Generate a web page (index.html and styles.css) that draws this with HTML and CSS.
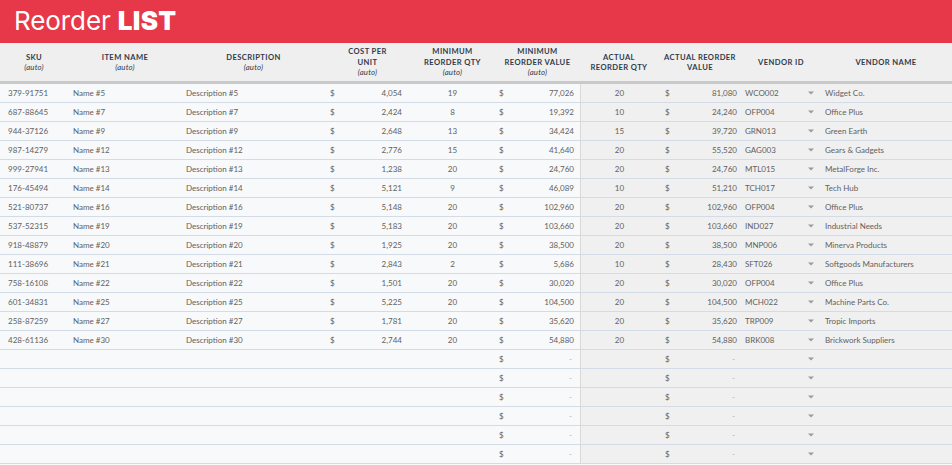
FILE: index.html
```html
<!DOCTYPE html>
<html>
<head>
<meta charset="utf-8">
<link rel="stylesheet" href="styles.css">
</head>
<body>
<div class="banner"><h1 class="title">Reorder <b>LIST</b></h1></div>
<div class="table">
  <div class="row head">
    <div class="hc">SKU<i>(auto)</i></div>
    <div class="hc">ITEM NAME<i>(auto)</i></div>
    <div class="hc">DESCRIPTION<i>(auto)</i></div>
    <div class="hc">COST PER<br>UNIT<i>(auto)</i></div>
    <div class="hc">MINIMUM<br>REORDER QTY<i>(auto)</i></div>
    <div class="hc">MINIMUM<br>REORDER VALUE<i>(auto)</i></div>
    <div class="hc">ACTUAL<br>REORDER QTY</div>
    <div class="hc">ACTUAL REORDER<br>VALUE</div>
    <div class="hc">VENDOR ID</div>
    <div class="hc">VENDOR NAME</div>
  </div>
  <div id="body"></div>
</div>
<script src="app.js"></script>
</body>
</html>
```

FILE: app.js
```js
var data = [
["379-91751","Name #5","Description #5","4,054","19","77,026","20","81,080","WCO002","Widget Co."],
["687-88645","Name #7","Description #7","2,424","8","19,392","10","24,240","OFP004","Office Plus"],
["944-37126","Name #9","Description #9","2,648","13","34,424","15","39,720","GRN013","Green Earth"],
["987-14279","Name #12","Description #12","2,776","15","41,640","20","55,520","GAG003","Gears &amp; Gadgets"],
["999-27941","Name #13","Description #13","1,238","20","24,760","20","24,760","MTL015","MetalForge Inc."],
["176-45494","Name #14","Description #14","5,121","9","46,089","10","51,210","TCH017","Tech Hub"],
["521-80737","Name #16","Description #16","5,148","20","102,960","20","102,960","OFP004","Office Plus"],
["537-52315","Name #19","Description #19","5,183","20","103,660","20","103,660","IND027","Industrial Needs"],
["918-48879","Name #20","Description #20","1,925","20","38,500","20","38,500","MNP006","Minerva Products"],
["111-38696","Name #21","Description #21","2,843","2","5,686","10","28,430","SFT026","Softgoods Manufacturers"],
["758-16108","Name #22","Description #22","1,501","20","30,020","20","30,020","OFP004","Office Plus"],
["601-34831","Name #25","Description #25","5,225","20","104,500","20","104,500","MCH022","Machine Parts Co."],
["258-87259","Name #27","Description #27","1,781","20","35,620","20","35,620","TRP009","Tropic Imports"],
["428-61136","Name #30","Description #30","2,744","20","54,880","20","54,880","BRK008","Brickwork Suppliers"]
];
var arrow = '<svg class="dd" width="6" height="4" viewBox="0 0 6 4"><path d="M0 0.5h6L3 3.5z" fill="#9a9a9a"/></svg>';
var html = "";
data.forEach(function(r){
  html += '<div class="row">' +
    '<div class="c">'+r[0]+'</div>' +
    '<div class="c">'+r[1]+'</div>' +
    '<div class="c">'+r[2]+'</div>' +
    '<div class="c cur cost"><span>$</span><span>'+r[3]+'</span></div>' +
    '<div class="c ctr">'+r[4]+'</div>' +
    '<div class="c cur minv"><span>$</span><span>'+r[5]+'</span></div>' +
    '<div class="c ctr g sep">'+r[6]+'</div>' +
    '<div class="c cur actv g"><span>$</span><span>'+r[7]+'</span></div>' +
    '<div class="c vid g"><span>'+r[8]+'</span>'+arrow+'</div>' +
    '<div class="c vname g">'+r[9]+'</div>' +
  '</div>';
});
for (var i=0;i<6;i++){
  html += '<div class="row">' +
    '<div class="c"></div><div class="c"></div><div class="c"></div><div class="c"></div><div class="c"></div>' +
    '<div class="c cur minv"><span>$</span><span class="dash">-</span></div>' +
    '<div class="c g sep"></div>' +
    '<div class="c cur actv g"><span>$</span><span class="dash">-</span></div>' +
    '<div class="c vid g"><span></span>'+arrow+'</div>' +
    '<div class="c g"></div>' +
  '</div>';
}
document.getElementById("body").innerHTML = html;
```

FILE: styles.css
```css
html, body { margin: 0; padding: 0; }
body {
  width: 952px;
  height: 465px;
  overflow: hidden;
  background: #f8f9fa;
  font-family: "Lato", "Liberation Sans", sans-serif;
}
.banner {
  height: 43px;
  background: #e63848;
  display: flex;
  align-items: center;
  padding-left: 14px;
}
.title {
  margin: 0;
  font-family: "Inter", "Liberation Sans", sans-serif;
  font-weight: 400;
  font-size: 26px;
  color: #fff;
  letter-spacing: -0.1px;
  line-height: 1;
  padding-bottom: 2px;
}
.title b { font-weight: 900; letter-spacing: 0.3px; }
.row {
  display: grid;
  grid-template-columns: 68px 114px 143px 85px 85px 85px 78px 84px 78px 132px;
  height: 19px;
  border-bottom: 1px solid #d3dce6;
  box-sizing: border-box;
}
.head {
  height: 41px;
  background: #efefef;
  border-bottom: 3px solid #c9c9c9;
  align-items: center;
}
.hc {
  text-align: center;
  font-weight: 700;
  font-size: 7.6px;
  line-height: 10.5px;
  letter-spacing: 0.4px;
  color: #2f3b4c;
}
.hc i {
  display: block;
  font-weight: 400;
  font-style: italic;
  letter-spacing: 0.2px;
  font-size: 7.8px;
}
.c {
  font-size: 8px;
  color: #616161;
  display: flex;
  align-items: center;
  white-space: nowrap;
  padding-left: 8px;
  overflow: hidden;
}
.row .c:nth-child(2) { padding-left: 5px; }
.row .c:nth-child(3) { padding-left: 4px; }
.g { background: #f0f0f0; }
.sep { border-left: 1px solid #d9d9d9; }
.ctr { justify-content: center; padding-left: 0; }
.cur { justify-content: space-between; }
.cost { padding-left: 5px; padding-right: 8px; }
.minv { padding-left: 4px; padding-right: 6px; }
.actv { padding-left: 7px; padding-right: 5px; }
.dash { color: #b0b0b0; padding-right: 2px; }
.vid { justify-content: space-between; padding-left: 3px; padding-right: 6px; }
.dd { display: block; }
.vname { padding-left: 5px; }
```
